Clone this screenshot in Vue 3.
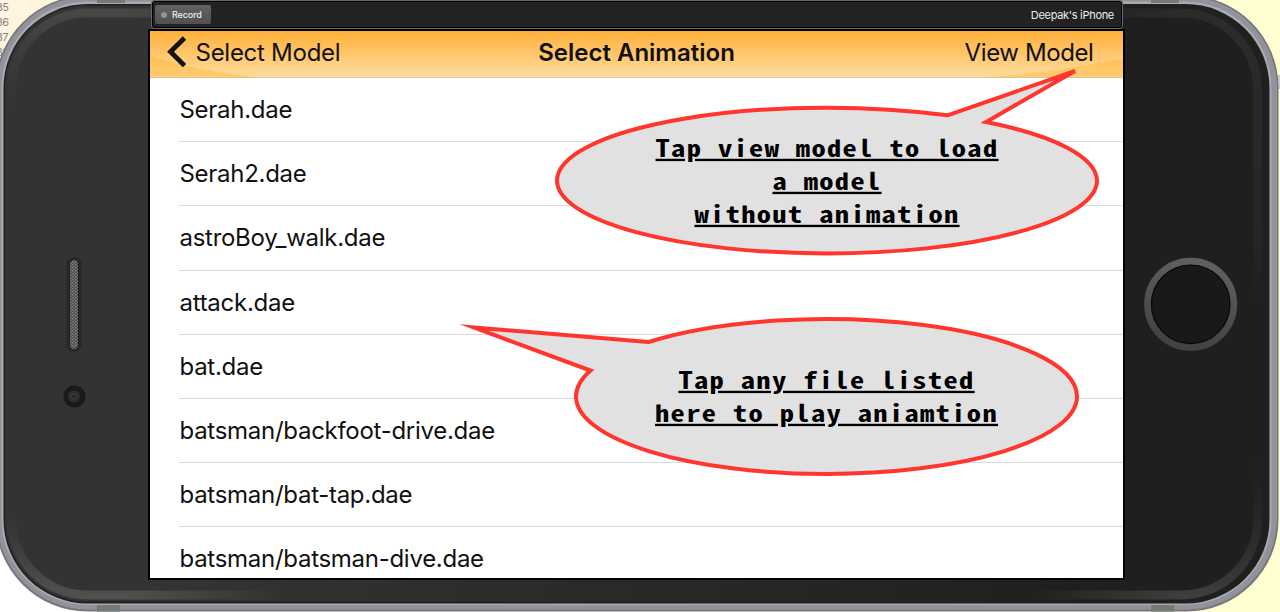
<script setup>
const files = ['Serah.dae', 'Serah2.dae', 'astroBoy_walk.dae', 'attack.dae', 'bat.dae', 'batsman/backfoot-drive.dae', 'batsman/bat-tap.dae', 'batsman/batsman-dive.dae']
const lineNumbers = ['85', '86', '87', '88']
</script>

<template>
  <div class="desktop">
    <div class="editor"><span v-for="n in lineNumbers" :key="n">{{ n }}</span></div>
    <svg class="phone" width="1280" height="612" viewBox="0 0 1280 612">
      <defs>
        <linearGradient id="face" x1="0" x2="1" y1="0" y2="0">
          <stop offset="0" stop-color="#333" /><stop offset="0.15" stop-color="#333" />
          <stop offset="0.6" stop-color="#262626" /><stop offset="0.85" stop-color="#1f1f1f" /><stop offset="1" stop-color="#1f1f1f" />
        </linearGradient>
        <linearGradient id="ring" x1="0.6" x2="0.4" y1="0" y2="1">
          <stop offset="0" stop-color="#606060" /><stop offset="1" stop-color="#414141" />
        </linearGradient>
        <linearGradient id="shine" x1="0" x2="0" y1="0" y2="1">
          <stop offset="0" stop-color="#474747" /><stop offset="0.05" stop-color="#3e3e3e" /><stop offset="0.18" stop-color="#3a3a3a" stop-opacity="0" />
          <stop offset="0.86" stop-color="#4b4b4b" stop-opacity="0" /><stop offset="1" stop-color="#505050" />
        </linearGradient>
        <linearGradient id="shineDark" x1="0" x2="0" y1="0" y2="1">
          <stop offset="0" stop-color="#2b2b2b" /><stop offset="0.4" stop-color="#252525" />
          <stop offset="0.5" stop-color="#252525" stop-opacity="0" /><stop offset="0.75" stop-color="#252525" stop-opacity="0" />
          <stop offset="1" stop-color="#3e3e3e" />
        </linearGradient>
        <linearGradient id="sides" gradientUnits="userSpaceOnUse" x1="0" x2="1280" y1="0" y2="0">
          <stop offset="0" stop-color="#fff" /><stop offset="0.1" stop-color="#fff" /><stop offset="0.22" stop-color="#000" />
          <stop offset="0.8" stop-color="#000" /><stop offset="0.92" stop-color="#fff" /><stop offset="1" stop-color="#fff" />
        </linearGradient>
        <mask id="ends" maskUnits="userSpaceOnUse" x="0" y="0" width="1280" height="612"><rect width="1280" height="612" fill="url(#sides)" /></mask>
        <pattern id="mesh" width="3" height="3" patternUnits="userSpaceOnUse">
          <rect width="3" height="3" fill="#444" /><rect width="1.5" height="1.5" fill="#888" /><rect x="1.5" y="1.5" width="1.5" height="1.5" fill="#777" />
        </pattern>
        <clipPath id="left"><rect width="640" height="612" /></clipPath>
        <clipPath id="right"><rect x="640" width="640" height="612" /></clipPath>
      </defs>
      <rect x="1276" y="75" width="4" height="14" fill="#c9c9cf" />
      <rect x="-4.500" y="-4.500" width="1283" height="616" rx="92" fill="#77777d" />
      <rect x="-3" y="-3" width="1280" height="612.500" rx="91" fill="#92929a" />
      <rect x="1.500" y="1.500" width="1270" height="603.500" rx="86" fill="#aaaab1" />
      <g fill="#747a78">
        <rect x="97" width="28" height="3" /><rect x="1151" width="28" height="3" />
        <rect x="97" y="605" width="23" height="6.500" /><rect x="1151" y="605" width="23" height="6.500" />
      </g>
      <rect x="3.500" y="4" width="1266" height="599.500" rx="84" fill="#202020" />
      <rect x="5" y="5.500" width="1263" height="596" rx="82" fill="url(#face)" />
      <g mask="url(#ends)" fill="none" stroke-width="9">
        <rect x="11.500" y="13" width="1250" height="582" rx="76" stroke="url(#shine)" clip-path="url(#left)" />
        <rect x="11.500" y="13" width="1246" height="582" rx="76" stroke="url(#shineDark)" clip-path="url(#right)" />
      </g>
      <rect x="66" y="257" width="16" height="95" rx="8" fill="#292929" />
      <rect x="69.500" y="259.500" width="9" height="90" rx="4.500" fill="url(#mesh)" stroke="#1c1c1c" />
      <circle cx="74.500" cy="396.500" r="11" fill="#1a1a1a" /><circle cx="74" cy="396.500" r="6" fill="#2e2e2e" />
      <circle cx="74" cy="396.500" r="2.500" fill="#242424" stroke="#4a4a4a" stroke-width=".8" />
      <circle cx="1190.700" cy="304.300" r="43" fill="#191919" stroke="url(#ring)" stroke-width="7" />
      <circle cx="1190.700" cy="304.300" r="39.300" fill="#191919" stroke="#080808" stroke-width="1.200" />
    </svg>

    <div class="window">
      <div class="recorder">
        <div class="record"><i></i>Record</div>
        <span class="device">Deepak's iPhone</span>
      </div>
      <div class="screen">
        <header class="nav">
          <svg class="sheen" width="973" height="47" viewBox="0 0 973 47">
            <path d="M0 25Q45 39 112 47H0ZM973 28Q900 42 826 47H973Z" fill="#ffb52e" opacity=".4" />
          </svg>
          <span class="back"><svg width="22" height="34" viewBox="0 0 22 34"><path d="M18.500 3L4.500 16.800L18.500 30.600" fill="none" stroke="#111" stroke-width="4.800" /></svg><span>Select Model</span></span>
          <h1>Select Animation</h1>
          <span class="view">View Model</span>
        </header>
        <ul class="files">
          <li v-for="f in files" :key="f">{{ f }}</li>
        </ul>
      </div>
    </div>

    <svg class="notes" width="1280" height="612" viewBox="0 0 1280 612">
      <g fill="#e1e1e1" stroke="#ff352e" stroke-width="4" stroke-miterlimit="9">
        <path d="M947.500 115.300L1075 71L986 122A270 73 0 0 1 1097 180.500A270 73 0 0 1 557 180.500A270 73 0 0 1 947.500 115.300Z" />
        <path d="M648.500 342L474 327.500L590.500 370.500A250.500 77.500 0 0 0 576 396.500A250.500 77.500 0 0 0 1077 396.500A250.500 77.500 0 0 0 648.500 342Z" />
      </g>
      <g class="note" text-anchor="middle" transform="scale(1.22 1)">
        <text x="677.900" y="157">Tap view model to load</text>
        <text x="677.900" y="190">a model</text>
        <text x="677.900" y="223">without animation</text>
        <text x="677.500" y="389">Tap any file listed</text>
        <text x="677.500" y="422">here to play aniamtion</text>
      </g>
    </svg>
  </div>
</template>

<style>
body { margin: 0; overflow: hidden; }
</style>
<style scoped>
.desktop { position: relative; width: 1280px; height: 612px; overflow: hidden; background: linear-gradient(90deg, #fff 50%, #ffffd2 50%); font-family: Inter, "Liberation Sans", sans-serif; }
.editor { position: absolute; left: 0; top: 0; width: 80px; height: 80px; background: #fff5df; display: flex; flex-direction: column; }
.editor span { font-size: 11px; line-height: 15px; color: #858585; margin-left: -4px; letter-spacing: -.5px; }
.phone, .notes { position: absolute; left: 0; top: 0; }
.window { position: relative; margin-left: 148px; padding-top: 1px; width: 977px; }
.recorder { box-sizing: border-box; margin-left: 4px; width: 970px; height: 27px; border: 1px solid #000; outline: 1px solid #666; background: #222; border-radius: 2px; display: flex; align-items: center; justify-content: space-between; padding: 0 7px 0 2px; color: #eee; font-size: 11px; letter-spacing: -.3px; }
.record { box-sizing: border-box; width: 56px; height: 19px; border-radius: 2px; background: linear-gradient(#626262, #505050); display: flex; align-items: center; gap: 5px; padding-left: 6px; font-size: 9px; font-weight: 500; letter-spacing: -.15px; }
.record i { width: 6px; height: 6px; border-radius: 50%; background: #929292; }
.screen { box-sizing: border-box; margin-top: 1px; width: 977px; height: 551px; border: 2px solid #000; background: #fff; overflow: hidden; color: #111; }
.nav { box-sizing: border-box; position: relative; height: 47px; background: linear-gradient(#ffb03a, #ffdc9d); border-bottom: 1px solid #cfc9c6; display: flex; justify-content: space-between; padding: 0 29.500px 0 16px; line-height: 44px; font-size: 24px; white-space: nowrap; }
.sheen { position: absolute; left: 0; top: 0; }
.back { position: relative; display: flex; align-items: flex-start; gap: 7.500px; letter-spacing: -.27px; }
.back svg { margin-top: 4px; }
h1 { position: absolute; left: 0; right: 0; top: 0; margin: 0; text-align: center; font-size: 24px; font-weight: 600; line-height: 44px; }
.view { position: relative; letter-spacing: -.4px; }
.files { margin: 0; padding: 0; list-style: none; }
.files li { box-sizing: border-box; height: 64.200px; margin-left: 29px; padding-left: .5px; border-bottom: 1px solid #d9d9de; line-height: 63.200px; font-size: 24px; letter-spacing: -.28px; white-space: nowrap; }
.note { font-family: "Noto Sans Mono CJK SC", "Noto Sans Mono CJK JP", "DejaVu Sans Mono", monospace; font-size: 23.300px; font-weight: 700; letter-spacing: 1.140px; text-decoration: underline; }
</style>
